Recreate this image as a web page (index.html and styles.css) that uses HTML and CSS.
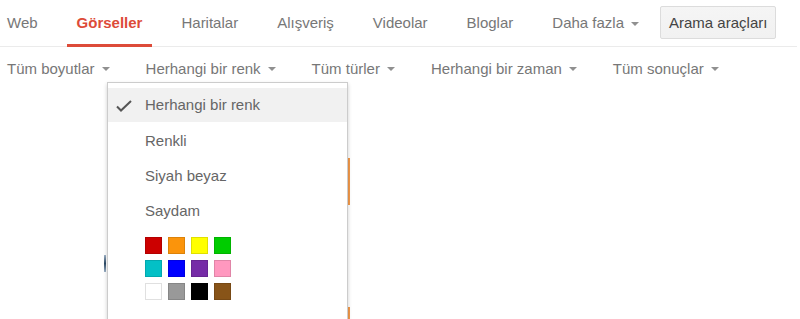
FILE: index.html
```html
<!DOCTYPE html>
<html lang="tr">
<head>
    <meta charset="UTF-8">
    <meta name="viewport" content="width=device-width, initial-scale=1.0">
    <title>Görseller</title>
    <link rel="stylesheet" href="styles.css">
</head>
<body>
    <div class="nav">
        <a class="tab" href="#">Web</a>
        <a class="tab active" href="#">Görseller</a>
        <a class="tab" href="#">Haritalar</a>
        <a class="tab" href="#">Alışveriş</a>
        <a class="tab" href="#">Videolar</a>
        <a class="tab" href="#">Bloglar</a>
        <a class="tab" href="#">Daha fazla<span class="arrow"></span></a>
        <button class="tools">Arama araçları</button>
    </div>

    <div class="filters">
        <span class="filter">Tüm boyutlar<span class="arrow"></span></span>
        <span class="filter">Herhangi bir renk<span class="arrow"></span></span>
        <span class="filter">Tüm türler<span class="arrow"></span></span>
        <span class="filter">Herhangi bir zaman<span class="arrow"></span></span>
        <span class="filter">Tüm sonuçlar<span class="arrow"></span></span>

        <!-- colour dropdown, open -->
        <div class="menu">
            <div class="menu-item selected">
                <svg class="check" width="16" height="12" viewBox="0 0 16 12">
                    <path d="M1 6.5 L5 10.5 L15 1" fill="none" stroke="#555" stroke-width="2"/>
                </svg>
                Herhangi bir renk
            </div>
            <div class="menu-item">Renkli</div>
            <div class="menu-item">Siyah beyaz</div>
            <div class="menu-item">Saydam</div>
            <div class="swatches">
                <span class="swatch" style="background:#cc0000"></span>
                <span class="swatch" style="background:#fb940b"></span>
                <span class="swatch" style="background:#ffff00"></span>
                <span class="swatch" style="background:#00cc00"></span>
                <span class="swatch" style="background:#03c0c6"></span>
                <span class="swatch" style="background:#0000ff"></span>
                <span class="swatch" style="background:#762ca7"></span>
                <span class="swatch" style="background:#ff98bf"></span>
                <span class="swatch" style="background:#ffffff"></span>
                <span class="swatch" style="background:#999999"></span>
                <span class="swatch" style="background:#000000"></span>
                <span class="swatch" style="background:#885418"></span>
            </div>
        </div>
    </div>

    <!-- image results, mostly hidden behind the open menu -->
    <div class="results">
        <div class="row row-a"><div class="thumb orange"></div></div>
        <div class="row row-b"><div class="thumb dark"></div></div>
        <div class="row row-c"><div class="thumb orange"></div></div>
    </div>
</body>
</html>
```

FILE: styles.css
```css
body {
    margin: 0;
    font-family: Arial, "Liberation Sans", sans-serif;
    font-size: 15px;
    color: #777;
    background-color: #fff;
    overflow: hidden;
}
.nav {
    display: flex;
    align-items: center;
    height: 46px;
    padding-left: 7px;
    gap: 39px;
    border-bottom: 1px solid #ebebeb;
    margin-right: 3px;
}
.tab {
    position: relative;
    color: #777;
    text-decoration: none;
    line-height: 44px;
    display: flex;
    align-items: center;
}
.tab.active {
    color: #dd4b39;
    font-weight: bold;
}
.tab.active::after {
    content: "";
    position: absolute;
    left: -10px;
    right: -10px;
    bottom: -2px;
    height: 3px;
    background-color: #dd4b39;
}
.arrow {
    display: inline-block;
    width: 0;
    height: 0;
    border-left: 4px solid transparent;
    border-right: 4px solid transparent;
    border-top: 4px solid #909090;
    margin-left: 7px;
    margin-top: 1px;
}
.tools {
    margin-left: -18px;
    height: 33px;
    padding: 0 8px;
    font-family: Arial, "Liberation Sans", sans-serif;
    font-size: 15px;
    color: #444;
    background: linear-gradient(#f5f5f5, #f1f1f1);
    border: 1px solid #dcdcdc;
    border-radius: 2px;
    margin-top: -2px;
}
.filters {
    position: relative;
    display: flex;
    align-items: center;
    gap: 36px;
    height: 42px;
    padding-left: 7px;
}
.filter {
    display: flex;
    align-items: center;
    color: #777;
}
.menu {
    position: absolute;
    top: 35px;
    left: 107px;
    width: 239px;
    height: 260px;
    padding-top: 5px;
    background-color: #fff;
    border: 1px solid rgba(0, 0, 0, 0.2);
    box-shadow: 0 2px 4px rgba(0, 0, 0, 0.2);
    z-index: 2;
}
.menu-item {
    position: relative;
    height: 35px;
    line-height: 35px;
    padding-left: 37px;
    color: #666;
}
.menu-item.selected {
    background-color: #f1f1f1;
    height: 34px;
    line-height: 34px;
    margin-bottom: 1px;
}
.check {
    position: absolute;
    left: 8px;
    top: 12px;
}
.swatches {
    display: grid;
    grid-template-columns: repeat(4, 17px);
    grid-auto-rows: 17px;
    gap: 6px;
    padding: 9px 0 0 37px;
}
.swatch {
    display: block;
    box-sizing: border-box;
    border: 1px solid rgba(0, 0, 0, 0.12);
}
.results {
    display: flex;
    flex-direction: column;
}
.row {
    display: flex;
}
.row-a {
    margin-top: 69px;
    height: 47px;
}
.row-b {
    margin-top: 50px;
    height: 17px;
}
.row-c {
    margin-top: 35px;
    height: 30px;
}
.thumb {
    height: 100%;
}
.orange {
    width: 150px;
    margin-left: 200px;
    background-color: #f39a4a;
}
.dark {
    width: 2px;
    margin-left: 104px;
    background: linear-gradient(#9fb3c8, #2d4a66, #9fb3c8);
}
```
